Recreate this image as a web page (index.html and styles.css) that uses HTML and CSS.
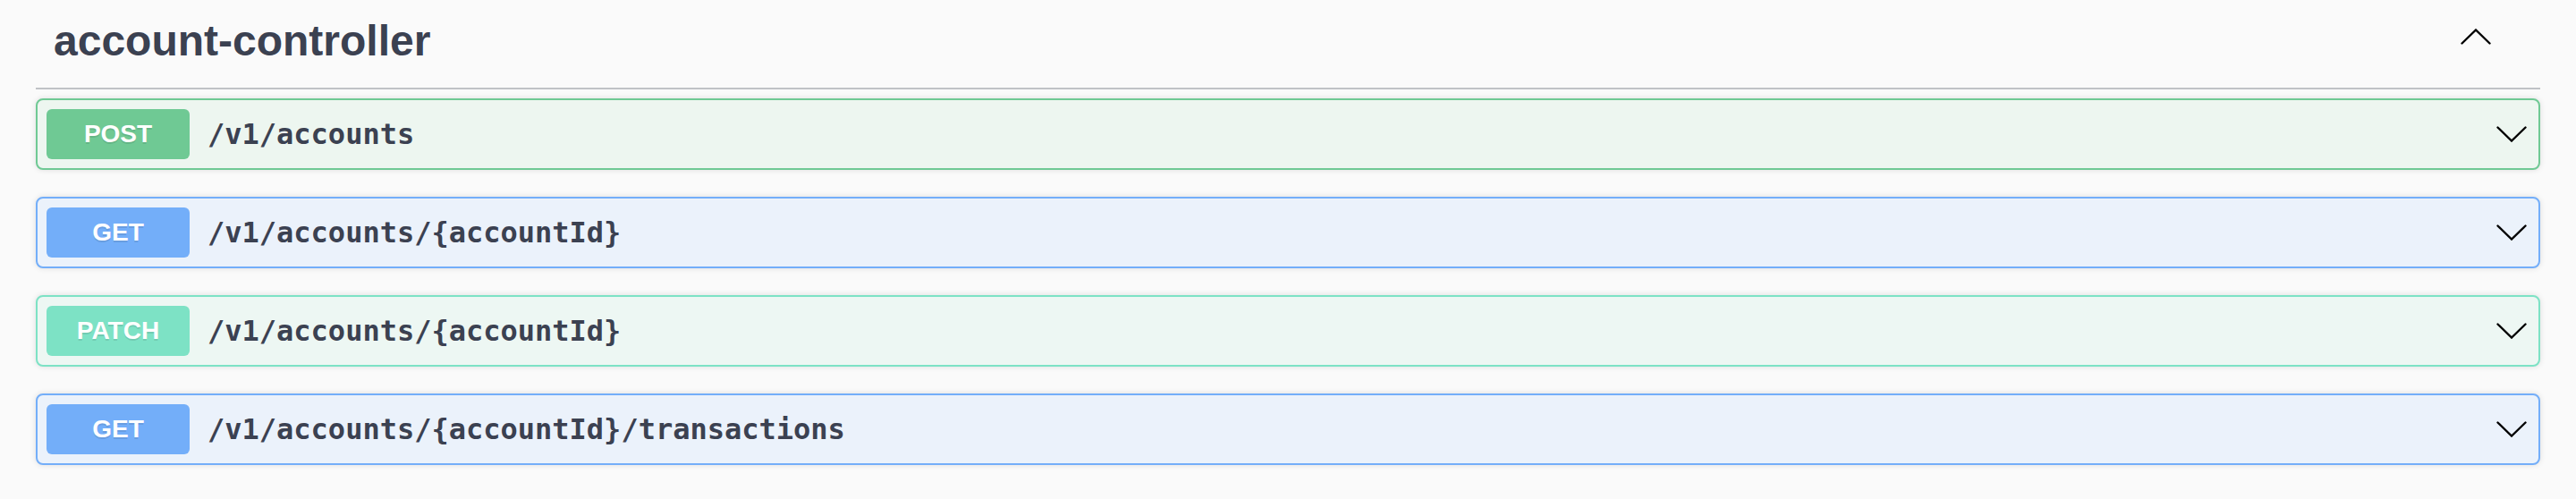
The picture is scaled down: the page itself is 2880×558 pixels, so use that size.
FILE: index.html
```html
<!DOCTYPE html>
<html lang="en">
<head>
<meta charset="utf-8">
<title>account-controller</title>
<link rel="stylesheet" href="styles.css">
</head>
<body>
<div class="wrapper">
  <section class="tag-section">
    <h3 class="tag">
      <span class="tag-name">account-controller</span>
      <svg class="arrow arrow-up" width="34" height="18" viewBox="0 0 34 18" aria-hidden="true"><polyline points="1.5,16.5 17,1.5 32.5,16.5" fill="none" stroke="#000" stroke-width="2.4" stroke-linecap="round" stroke-linejoin="miter"/></svg>
    </h3>
    <div class="ops">
      <div class="op op-post">
        <div class="summary">
          <span class="method">POST</span>
          <span class="path">/v1/accounts</span>
          <svg class="arrow" width="34" height="18" viewBox="0 0 34 18" aria-hidden="true"><polyline points="1.5,1.5 17,16.5 32.5,1.5" fill="none" stroke="#000" stroke-width="2.4" stroke-linecap="round"/></svg>
        </div>
      </div>
      <div class="op op-get">
        <div class="summary">
          <span class="method">GET</span>
          <span class="path">/v1/accounts/{accountId}</span>
          <svg class="arrow" width="34" height="18" viewBox="0 0 34 18" aria-hidden="true"><polyline points="1.5,1.5 17,16.5 32.5,1.5" fill="none" stroke="#000" stroke-width="2.4" stroke-linecap="round"/></svg>
        </div>
      </div>
      <div class="op op-patch">
        <div class="summary">
          <span class="method">PATCH</span>
          <span class="path">/v1/accounts/{accountId}</span>
          <svg class="arrow" width="34" height="18" viewBox="0 0 34 18" aria-hidden="true"><polyline points="1.5,1.5 17,16.5 32.5,1.5" fill="none" stroke="#000" stroke-width="2.4" stroke-linecap="round"/></svg>
        </div>
      </div>
      <div class="op op-get">
        <div class="summary">
          <span class="method">GET</span>
          <span class="path">/v1/accounts/{accountId}/transactions</span>
          <svg class="arrow" width="34" height="18" viewBox="0 0 34 18" aria-hidden="true"><polyline points="1.5,1.5 17,16.5 32.5,1.5" fill="none" stroke="#000" stroke-width="2.4" stroke-linecap="round"/></svg>
        </div>
      </div>
    </div>
  </section>
</div>
</body>
</html>
```

FILE: styles.css
```css
html, body {
  margin: 0;
  padding: 0;
  background: #fafafa;
}

body {
  font-family: "Liberation Sans", Arial, sans-serif;
  color: #3b4151;
  height: 558px;
  overflow: hidden;
}

.wrapper {
  padding: 0 40px;
}

.tag {
  display: flex;
  align-items: flex-start;
  margin: 0 0 10px 0;
  padding: 22px 40px 28px 20px;
  border-bottom: 2px solid rgba(59, 65, 81, 0.3);
  font-size: 48px;
  line-height: 48px;
  font-weight: 700;
  color: #3b4151;
}

.tag-name {
  flex: 1;
}

.arrow-up {
  margin-top: 10px;
  margin-right: 15px;
  flex: none;
}

.ops {
  display: flex;
  flex-direction: column;
  gap: 30px;
}

.op {
  border: 2px solid;
  border-radius: 8px;
  box-shadow: 0 0 6px rgba(0, 0, 0, 0.12);
}

.summary {
  display: flex;
  align-items: center;
  padding: 10px;
}

.method {
  flex: none;
  width: 160px;
  height: 56px;
  border-radius: 6px;
  display: flex;
  align-items: center;
  justify-content: center;
  color: #fff;
  font-family: "Liberation Sans", Arial, sans-serif;
  font-weight: 700;
  font-size: 28px;
  text-shadow: 0 2px 0 rgba(0, 0, 0, 0.1);
}

.path {
  flex: 1;
  padding: 0 20px;
  font-family: "DejaVu Sans Mono", monospace;
  font-weight: 700;
  font-size: 32px;
  color: #3b4151;
}

.summary .arrow {
  flex: none;
  margin-right: 3px;
}

.op-post {
  border-color: #6fc994;
  background: #edf6f0;
}
.op-post .method {
  background: #6fc994;
}

.op-get {
  border-color: #73aef9;
  background: #ebf2fb;
}
.op-get .method {
  background: #73aef9;
}

.op-patch {
  border-color: #7de2c5;
  background: #edf7f3;
}
.op-patch .method {
  background: #7de2c5;
}
```
